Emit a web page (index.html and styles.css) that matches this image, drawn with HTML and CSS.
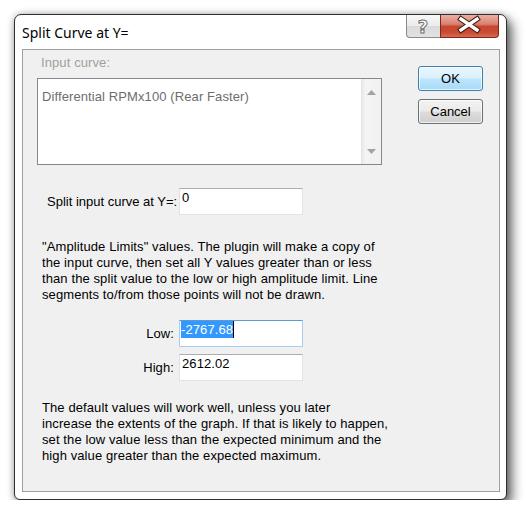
FILE: index.html
```html
<!DOCTYPE html>
<html lang="en">
<head>
    <meta charset="UTF-8">
    <title>Split Curve at Y=</title>
    <link rel="stylesheet" href="styles.css">
</head>
<body>
    <div class="window">
        <div class="titlebar">
            <span class="title">Split Curve at Y=</span>
            <div class="caption-buttons">
                <span class="cap-btn help">
                    <svg width="34" height="23" viewBox="0 0 34 23">
                        <text x="17" y="19" text-anchor="middle" class="help-glyph">?</text>
                    </svg>
                </span>
                <span class="cap-btn close">
                    <svg width="59" height="23" viewBox="0 0 59 23">
                        <path d="M21 5 L37 16 M21 16 L37 5" stroke="#3b1c16" stroke-width="5.5" stroke-linecap="square" />
                        <path d="M21 5 L37 16 M21 16 L37 5" stroke="#ffffff" stroke-width="3.4" stroke-linecap="square" />
                    </svg>
                </span>
            </div>
        </div>

        <div class="client">
            <div class="main">
                <div class="group-label">Input curve:</div>
                <div class="listbox">
                    <div class="list-item">Differential RPMx100 (Rear Faster)</div>
                    <div class="vscroll">
                        <svg width="9" height="5" viewBox="0 0 9 5"><path d="M4.5 0 L9 5 L0 5 Z" fill="#a3a3a3" /></svg>
                        <svg width="9" height="5" viewBox="0 0 9 5"><path d="M0 0 L9 0 L4.5 5 Z" fill="#a3a3a3" /></svg>
                    </div>
                </div>

                <div class="split-row">
                    <label class="split-label">Split input curve at Y=:</label>
                    <div class="edit">0</div>
                </div>

                <p class="note">
                    "Amplitude Limits" values. The plugin will make a copy of<br>
                    the input curve, then set all Y values greater than or less<br>
                    than the split value to the low or high amplitude limit. Line<br>
                    segments to/from those points will not be drawn.
                </p>

                <div class="limits">
                    <div class="limit-row">
                        <label class="limit-label">Low:</label>
                        <div class="edit focused"><span class="sel">-2767.68</span></div>
                    </div>
                    <div class="limit-row">
                        <label class="limit-label">High:</label>
                        <div class="edit">2612.02</div>
                    </div>
                </div>

                <p class="note note-bottom">
                    The default values will work well, unless you later<br>
                    increase the extents of the graph. If that is likely to happen,<br>
                    set the low value less than the expected minimum and the<br>
                    high value greater than the expected maximum.
                </p>
            </div>

            <div class="side">
                <button class="btn btn-default">OK</button>
                <button class="btn">Cancel</button>
            </div>
        </div>
    </div>
</body>
</html>
```

FILE: styles.css
```css
body {
    margin: 0;
    background: #ffffff;
    font-family: 'Liberation Sans', Arial, sans-serif;
    font-size: 13px;
    letter-spacing: 0.1px;
    color: #000;
}
.window {
    margin: 14px 0 0 14px;
    width: 493px;
    height: 486px;
    box-sizing: border-box;
    border: 1px solid #2e2e2e;
    border-radius: 7px 7px 6px 6px;
    background: #ffffff;
    padding: 0 6px 7px 7px;
    display: flex;
    flex-direction: column;
    box-shadow: 5px 6px 12px rgba(0,0,0,0.6), 0 0 7px rgba(0,0,0,0.25);
}
.titlebar {
    height: 34px;
    display: flex;
    justify-content: space-between;
    align-items: flex-start;
}
.title {
    font-family: 'Noto Sans', 'Open Sans', sans-serif;
    font-size: 14px;
    letter-spacing: 0;
    line-height: 20px;
    margin-top: 8px;
}
.caption-buttons {
    display: flex;
    margin-right: 1px;
}
.cap-btn {
    display: block;
    height: 23px;
    box-sizing: border-box;
    border: 1px solid #8a8a8a;
    border-top: none;
}
.cap-btn svg {
    display: block;
    margin: -1px 0 0 -1px;
}
.help {
    width: 34px;
    border-radius: 0 0 0 4px;
    border-right: none;
    background: linear-gradient(#f8f8f8 0%, #ececec 48%, #dadada 52%, #e2e2e2 100%);
}
.help-glyph {
    font-family: 'DejaVu Sans', sans-serif;
    font-weight: bold;
    font-size: 18px;
    fill: #ffffff;
    stroke: #707070;
    stroke-width: 1;
}
.close {
    width: 59px;
    border-color: #7a2a1c;
    border-radius: 0 0 4px 0;
    background: linear-gradient(#eab0a3 0%, #d9806e 42%, #c7462e 52%, #c84a32 78%, #d86a52 100%);
}
.client {
    flex: 1;
    border: 1px solid #a0a0a0;
    background: #f0f0f0;
    display: grid;
    grid-template-columns: 345px 65px;
    column-gap: 36px;
    padding: 0 16px 0 14px;
}
.group-label {
    margin-top: 5px;
    padding-left: 4px;
    line-height: 16px;
    color: #a0a0a0;
}
.listbox {
    margin-top: 7px;
    height: 87px;
    box-sizing: border-box;
    border: 1px solid #828790;
    background: #ffffff;
    display: flex;
}
.list-item {
    flex: 1;
    padding: 10px 0 0 4px;
    line-height: 16px;
    color: #6d6d6d;
}
.vscroll {
    width: 20px;
    background: linear-gradient(to right, #e9e9e9, #f4f4f4 20%, #f1f1f1);
    border-left: 1px solid #e4e4e4;
    display: flex;
    flex-direction: column;
    justify-content: space-between;
    align-items: center;
    padding: 11px 0 10px;
    box-sizing: border-box;
}
.vscroll svg {
    display: block;
}
.split-row {
    margin-top: 23px;
    padding-left: 10px;
    display: flex;
    align-items: center;
}
.split-label {
    width: 132px;
    white-space: nowrap;
    letter-spacing: 0;
}
.edit {
    width: 124px;
    height: 27px;
    box-sizing: border-box;
    border: 1px solid #dfe3e8;
    border-top-color: #abadb3;
    background: #ffffff;
    padding: 0 2px;
    line-height: 17px;
}
.edit.focused {
    border-color: #a9cdee;
    border-top-color: #5b9bd5;
    padding-left: 1px;
}
.sel {
    display: inline-block;
    background: #3399ff;
    color: #ffffff;
    border-right: 1px solid #000;
}
.note {
    margin: 24px 0 0;
    padding-left: 5px;
    line-height: 16px;
    white-space: nowrap;
}
.limits {
    margin-top: 17px;
    display: flex;
    flex-direction: column;
    gap: 7px;
}
.limit-row {
    display: flex;
    align-items: center;
}
.limit-label {
    width: 142px;
    box-sizing: border-box;
    padding-right: 5px;
    text-align: right;
}
.note-bottom {
    margin-top: 19px;
}
.side {
    padding-top: 16px;
    display: flex;
    flex-direction: column;
    gap: 8px;
}
.btn {
    height: 25px;
    width: 65px;
    font-family: 'Liberation Sans', Arial, sans-serif;
    font-size: 13px;
    color: #000;
    border: 1px solid #707070;
    border-radius: 3px;
    background: linear-gradient(#f2f2f2 0%, #ebebeb 48%, #dddddd 52%, #cfcfcf 100%);
    box-shadow: inset 0 0 0 1px rgba(255,255,255,0.7);
    padding: 0;
}
.btn-default {
    border-color: #3c7fb1;
    background: linear-gradient(#eaf6fd 0%, #d9f0fc 48%, #bee6fd 52%, #a7d9f5 100%);
}
```
